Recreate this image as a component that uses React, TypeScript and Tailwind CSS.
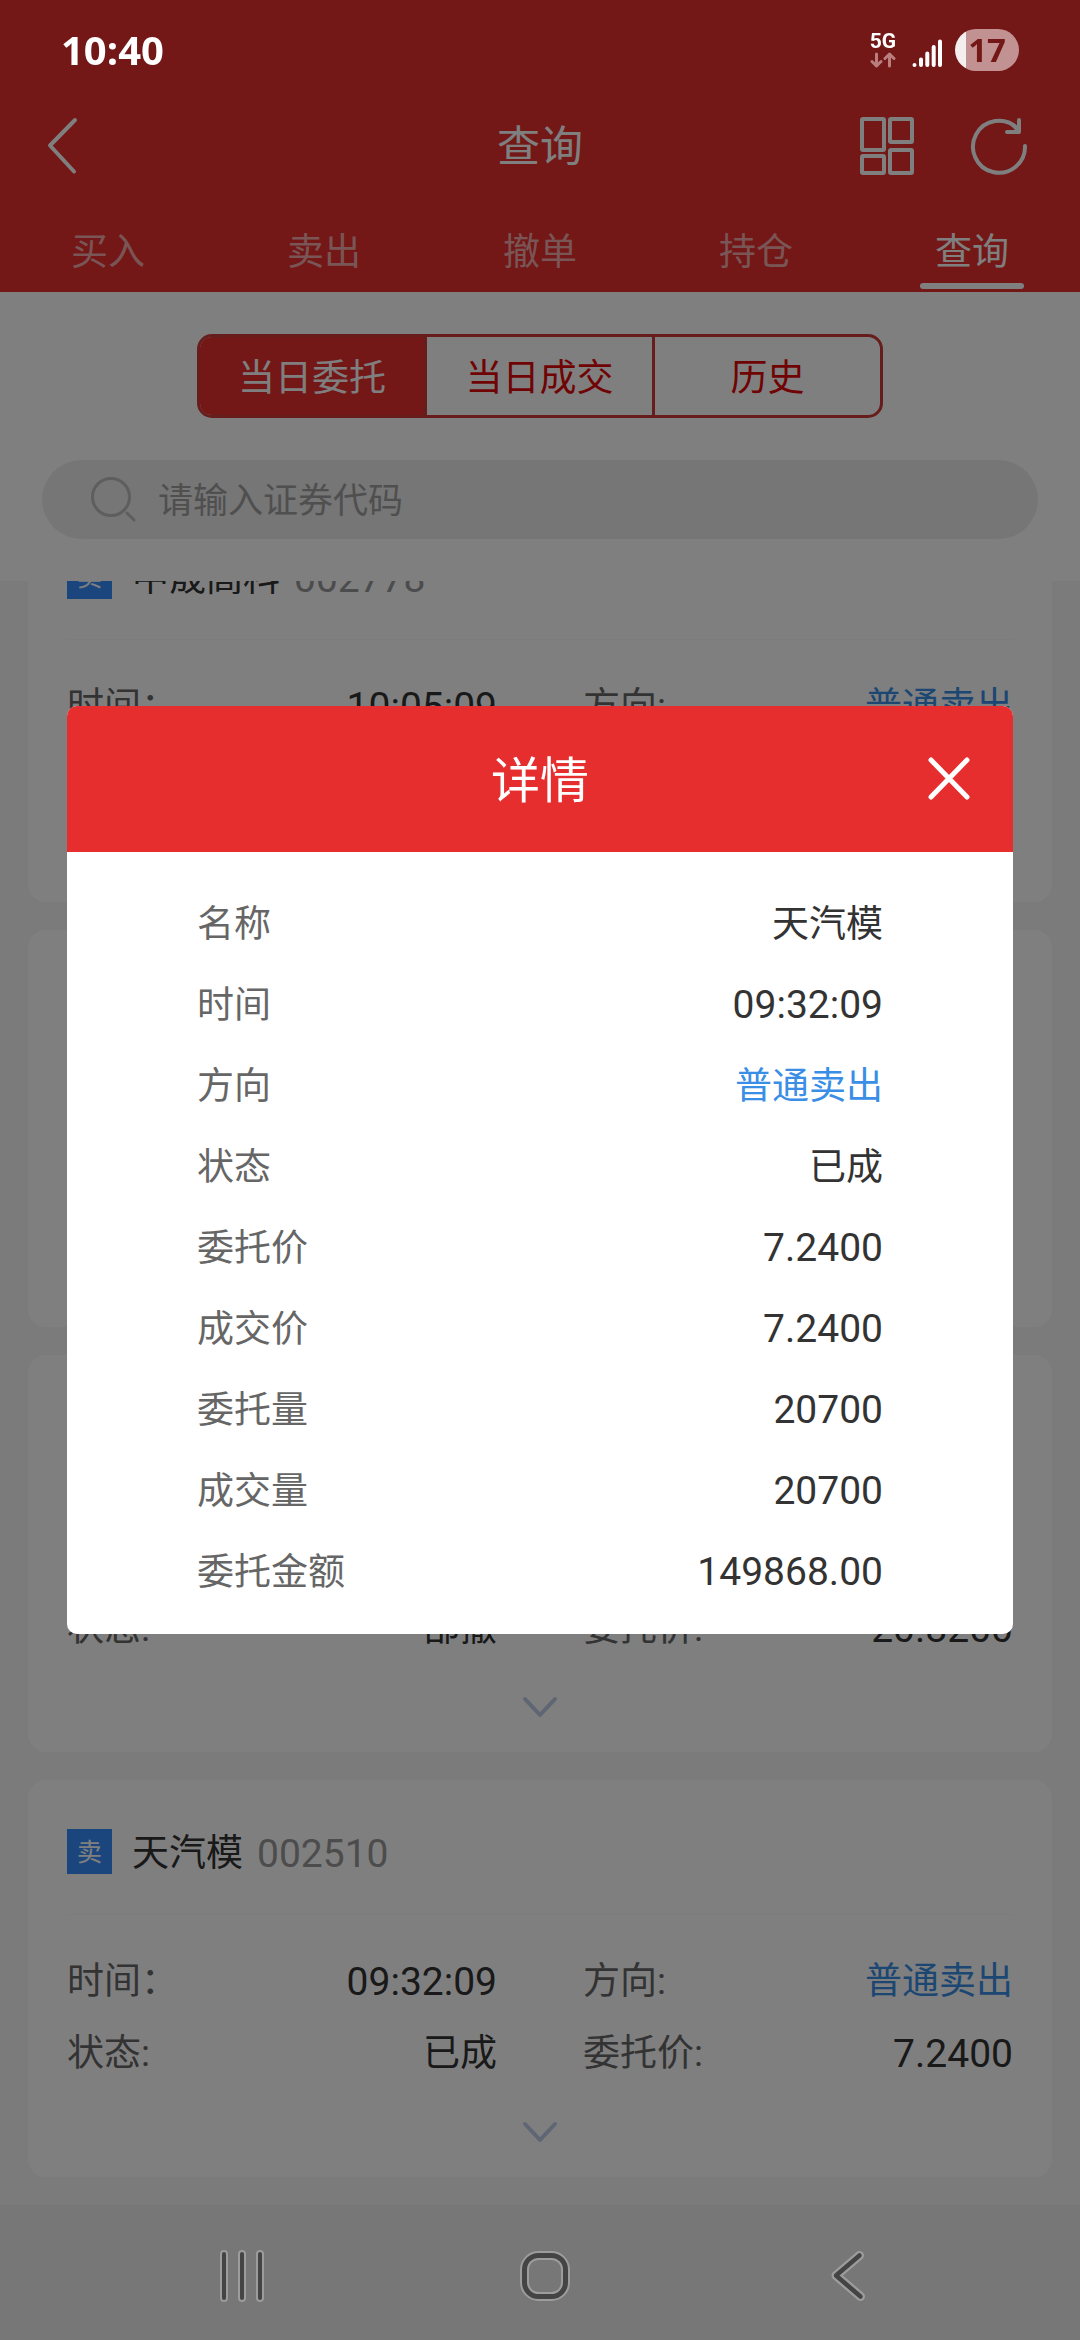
import { useState } from 'react';

type Order = {
  name: string;
  code: string;
  time: string;
  side: string;
  status: string;
  price: string;
};

const tabs = ['买入', '卖出', '撤单', '持仓', '查询'];
const segments = ['当日委托', '当日成交', '历史'];

const orders: Order[] = [
  { name: '中晟高科', code: '002778', time: '10:05:09', side: '普通卖出', status: '已成', price: '20.8200' },
  { name: '天汽模', code: '002510', time: '09:58:31', side: '普通卖出', status: '已成', price: '7.2400' },
  { name: '中晟高科', code: '002778', time: '09:41:26', side: '普通卖出', status: '部撤', price: '20.8200' },
  { name: '天汽模', code: '002510', time: '09:32:09', side: '普通卖出', status: '已成', price: '7.2400' },
];

const details = [
  { label: '名称', value: '天汽模', className: 'text-[37px] text-[#333333]' },
  { label: '时间', value: '09:32:09', className: 'text-[39px] text-[#333333]' },
  { label: '方向', value: '普通卖出', className: 'text-[37px] text-[#3a8ee6]' },
  { label: '状态', value: '已成', className: 'text-[37px] text-[#333333]' },
  { label: '委托价', value: '7.2400', className: 'text-[39px] text-[#333333]' },
  { label: '成交价', value: '7.2400', className: 'text-[39px] text-[#333333]' },
  { label: '委托量', value: '20700', className: 'text-[39px] text-[#333333]' },
  { label: '成交量', value: '20700', className: 'text-[39px] text-[#333333]' },
  { label: '委托金额', value: '149868.00', className: 'text-[39px] text-[#333333]' },
];

function StatusBar() {
  return (
    <div className="relative z-20 flex h-[98px] items-center justify-between px-[61px] pt-[2px] text-white">
      <span className="font-['Open_Sans',sans-serif] text-[40px] font-bold">10:40</span>
      <div className="flex items-center">
        <div className="mr-[16px] flex w-[26px] flex-col items-center gap-[3px]">
          <span className="text-[21px] leading-[16px] font-bold">5G</span>
          <svg width="26" height="16" viewBox="0 0 26 16" fill="none" stroke="#b97f7f" strokeWidth="3" strokeLinecap="round" strokeLinejoin="round">
            <path d="M6.500 2v12M2 9.500l4.500 4.500 4.500-4.500M19.500 14V2M15 6.500l4.500-4.500 4.500 4.500" />
          </svg>
        </div>
        <svg className="mr-[13px]" width="30" height="36" viewBox="0 0 30 36" stroke="#fff" strokeWidth="4" strokeLinecap="round">
          <path d="M2.500 33v0.100M9 27.500v5.500M15.300 21.500v11.500M21.700 15v18M28 9.500v23.500" />
        </svg>
        <div className="flex h-[42px] w-[64px] items-center justify-center rounded-full bg-[linear-gradient(90deg,#f5eeee_11px,#c29292_11px)] font-['Open_Sans',sans-serif] text-[33px] leading-[42px] font-bold text-[#731717]">
          17
        </div>
      </div>
    </div>
  );
}

function TitleBar() {
  return (
    <div className="grid h-[96px] grid-cols-3 items-center px-[46px] text-white">
      <button aria-label="返回" className="justify-self-start">
        <svg width="34" height="58" viewBox="0 0 34 58" fill="none" stroke="currentColor" strokeWidth="4" strokeLinecap="round" strokeLinejoin="round">
          <path d="M29 3L4 28.500l24 26" />
        </svg>
      </button>
      <h1 className="pt-[2px] text-center text-[43px] leading-[60px]">查询</h1>
      <div className="flex items-center gap-[56px] justify-self-end pr-[6px]">
        <button aria-label="菜单">
          <svg width="54" height="58" viewBox="0 0 54 58" fill="none" stroke="currentColor" strokeWidth="4">
            <rect x="2" y="2" width="22" height="31" rx="1" />
            <rect x="2" y="39" width="22" height="17" rx="1" />
            <rect x="30" y="2" width="22" height="23" rx="1" />
            <rect x="30" y="33" width="22" height="23" rx="1" />
          </svg>
        </button>
        <button aria-label="刷新">
          <svg width="58" height="58" viewBox="0 0 58 58" fill="none" stroke="currentColor" strokeWidth="4" strokeLinecap="round" strokeLinejoin="round">
            <path d="M55 29A26 26 0 1 1 47 11" />
            <path d="M49 3v12H37M43 8l6 6" />
          </svg>
        </button>
      </div>
    </div>
  );
}

function OrderCard({ order }: { order: Order }) {
  return (
    <article className="shrink-0 rounded-[18px] bg-white px-[39px] pt-[49px]">
      <div className="flex h-[86px] items-start border-b border-[#f8f8f8]">
        <span className="flex h-[45px] w-[45px] items-center justify-center bg-[#348bfa] pt-[3px] text-[25px] text-white">卖</span>
        <h2 className="ml-[20px] text-[37px] leading-[50px] text-[#333333]">{order.name}</h2>
        <span className="ml-[14px] text-[39px] leading-[50px] text-[#999999]">{order.code}</span>
      </div>
      <dl className="grid grid-cols-2 gap-x-[86px] pt-[31px] leading-[72px]">
        <div className="flex justify-between">
          <dt className="text-[37px] text-[#666666]">时间：</dt>
          <dd className="text-[39px] text-[#333333]">{order.time}</dd>
        </div>
        <div className="flex justify-between">
          <dt className="text-[37px] text-[#666666]">方向:</dt>
          <dd className="text-[37px] text-[#3a8ee6]">{order.side}</dd>
        </div>
        <div className="flex justify-between">
          <dt className="text-[37px] text-[#666666]">状态:</dt>
          <dd className="text-[37px] text-[#333333]">{order.status}</dd>
        </div>
        <div className="flex justify-between">
          <dt className="text-[37px] text-[#666666]">委托价:</dt>
          <dd className="text-[39px] text-[#333333]">{order.price}</dd>
        </div>
      </dl>
      <button aria-label="展开" className="flex h-[87px] w-full items-center justify-center pb-[3px] text-[#bccae6]">
        <svg width="36" height="22" viewBox="0 0 36 22" fill="none" stroke="currentColor" strokeWidth="4" strokeLinecap="round" strokeLinejoin="round">
          <path d="M3 3l15 16L33 3" />
        </svg>
      </button>
    </article>
  );
}

function DetailModal({ onClose }: { onClose: () => void }) {
  return (
    <div className="fixed inset-0 z-10 flex items-center justify-center bg-black/50 px-[67px]">
      <div role="dialog" aria-label="详情" className="w-full overflow-hidden rounded-[10px] bg-white">
        <div className="grid h-[146px] grid-cols-3 items-center bg-[#e62e2e] px-[42px] text-white">
          <h2 className="col-start-2 pt-[6px] text-center text-[49px]">详情</h2>
          <button aria-label="关闭" onClick={onClose} className="justify-self-end">
            <svg width="44" height="44" viewBox="0 0 44 44" stroke="currentColor" strokeWidth="5" strokeLinecap="round">
              <path d="M4 3l36 37M40 3L4 40" />
            </svg>
          </button>
        </div>
        <dl className="px-[130px] pt-[32px] pb-[21px] leading-[81px]">
          {details.map((d) => (
            <div key={d.label} className="flex justify-between">
              <dt className="text-[37px] text-[#666666]">{d.label}</dt>
              <dd className={d.className}>{d.value}</dd>
            </div>
          ))}
        </dl>
      </div>
    </div>
  );
}

function NavBar() {
  return (
    <nav className="relative z-20 grid h-[135px] shrink-0 grid-cols-3 items-center bg-[#777777] pt-[6px] pr-[81px] pl-[90px]">
      <button aria-label="最近任务" className="justify-self-center">
        <svg width="50" height="54" viewBox="0 0 50 54" strokeLinecap="round">
          <path d="M7 5v44M25 5v44M43 5v44" stroke="#9c9c9c" strokeWidth="8" />
          <path d="M7 5v44M25 5v44M43 5v44" stroke="#444444" strokeWidth="4" />
        </svg>
      </button>
      <button aria-label="主页" className="justify-self-center">
        <svg width="52" height="54" viewBox="0 0 52 54" fill="none">
          <rect x="5.500" y="6.500" width="41" height="41" rx="14" stroke="#9c9c9c" strokeWidth="9" />
          <rect x="5.500" y="6.500" width="41" height="41" rx="14" stroke="#444444" strokeWidth="5" />
        </svg>
      </button>
      <button aria-label="返回" className="justify-self-center">
        <svg width="38" height="54" viewBox="0 0 38 54" fill="none" strokeLinecap="round" strokeLinejoin="round">
          <path d="M30.500 6.500L7 26.500l24.500 21" stroke="#9c9c9c" strokeWidth="9" />
          <path d="M30.500 6.500L7 26.500l24.500 21" stroke="#444444" strokeWidth="4.500" />
        </svg>
      </button>
    </nav>
  );
}

export default function App() {
  const [tab, setTab] = useState('查询');
  const [segment, setSegment] = useState('当日委托');
  const [open, setOpen] = useState(true);

  return (
    <div className="flex h-screen flex-col overflow-hidden bg-white font-[Roboto,'Noto_Sans_CJK_SC',sans-serif]">
      <header className="shrink-0 bg-[#e62e2e]">
        <StatusBar />
        <TitleBar />
        <div className="grid h-[98px] grid-cols-5 text-[37px]">
          {tabs.map((t) => (
            <button
              key={t}
              onClick={() => setTab(t)}
              className={`flex flex-col items-center justify-end pb-[3px] leading-[60px] ${t === tab ? 'text-white' : 'text-white/60'}`}
            >
              {t}
              <span className={`h-[6px] w-[104px] rounded-full ${t === tab ? 'bg-white' : ''}`} />
            </button>
          ))}
        </div>
      </header>

      <section className="shrink-0 px-[42px] pt-[42px] pb-[42px]">
        <div className="mx-[155px] grid h-[84px] grid-cols-[227fr_228fr_225fr] divide-x-3 divide-[#d03a3a] overflow-hidden rounded-[15px] border-3 border-[#d03a3a] text-[37px]">
          {segments.map((s) => (
            <button
              key={s}
              onClick={() => setSegment(s)}
              className={`pt-[6px] ${s === segment ? 'bg-[#e62e2e] text-white' : 'text-[#e00808]'}`}
            >
              {s}
            </button>
          ))}
        </div>
        <label className="mt-[42px] flex h-[79px] items-center gap-[22px] rounded-full bg-[#ececec] pl-[48px]">
          <svg width="46" height="46" viewBox="0 0 46 46" fill="none" stroke="#bcbcbc" strokeWidth="3" strokeLinecap="round">
            <circle cx="21" cy="20" r="18.500" />
            <path d="M37 36l7 7" />
          </svg>
          <input
            type="text"
            aria-label="证券代码"
            placeholder="请输入证券代码"
            className="min-w-0 flex-1 bg-transparent pt-[6px] text-[35px] outline-none placeholder:text-[#9f9f9f]"
          />
        </label>
      </section>

      {/* order list, kept at its end */}
      <main className="flex min-h-0 flex-1 flex-col justify-end gap-[28px] overflow-hidden bg-[#f6f6f6] px-[28px] pb-[28px]">
        {orders.map((o, i) => (
          <OrderCard key={i} order={o} />
        ))}
      </main>

      <NavBar />
      {open && <DetailModal onClose={() => setOpen(false)} />}
    </div>
  );
}
